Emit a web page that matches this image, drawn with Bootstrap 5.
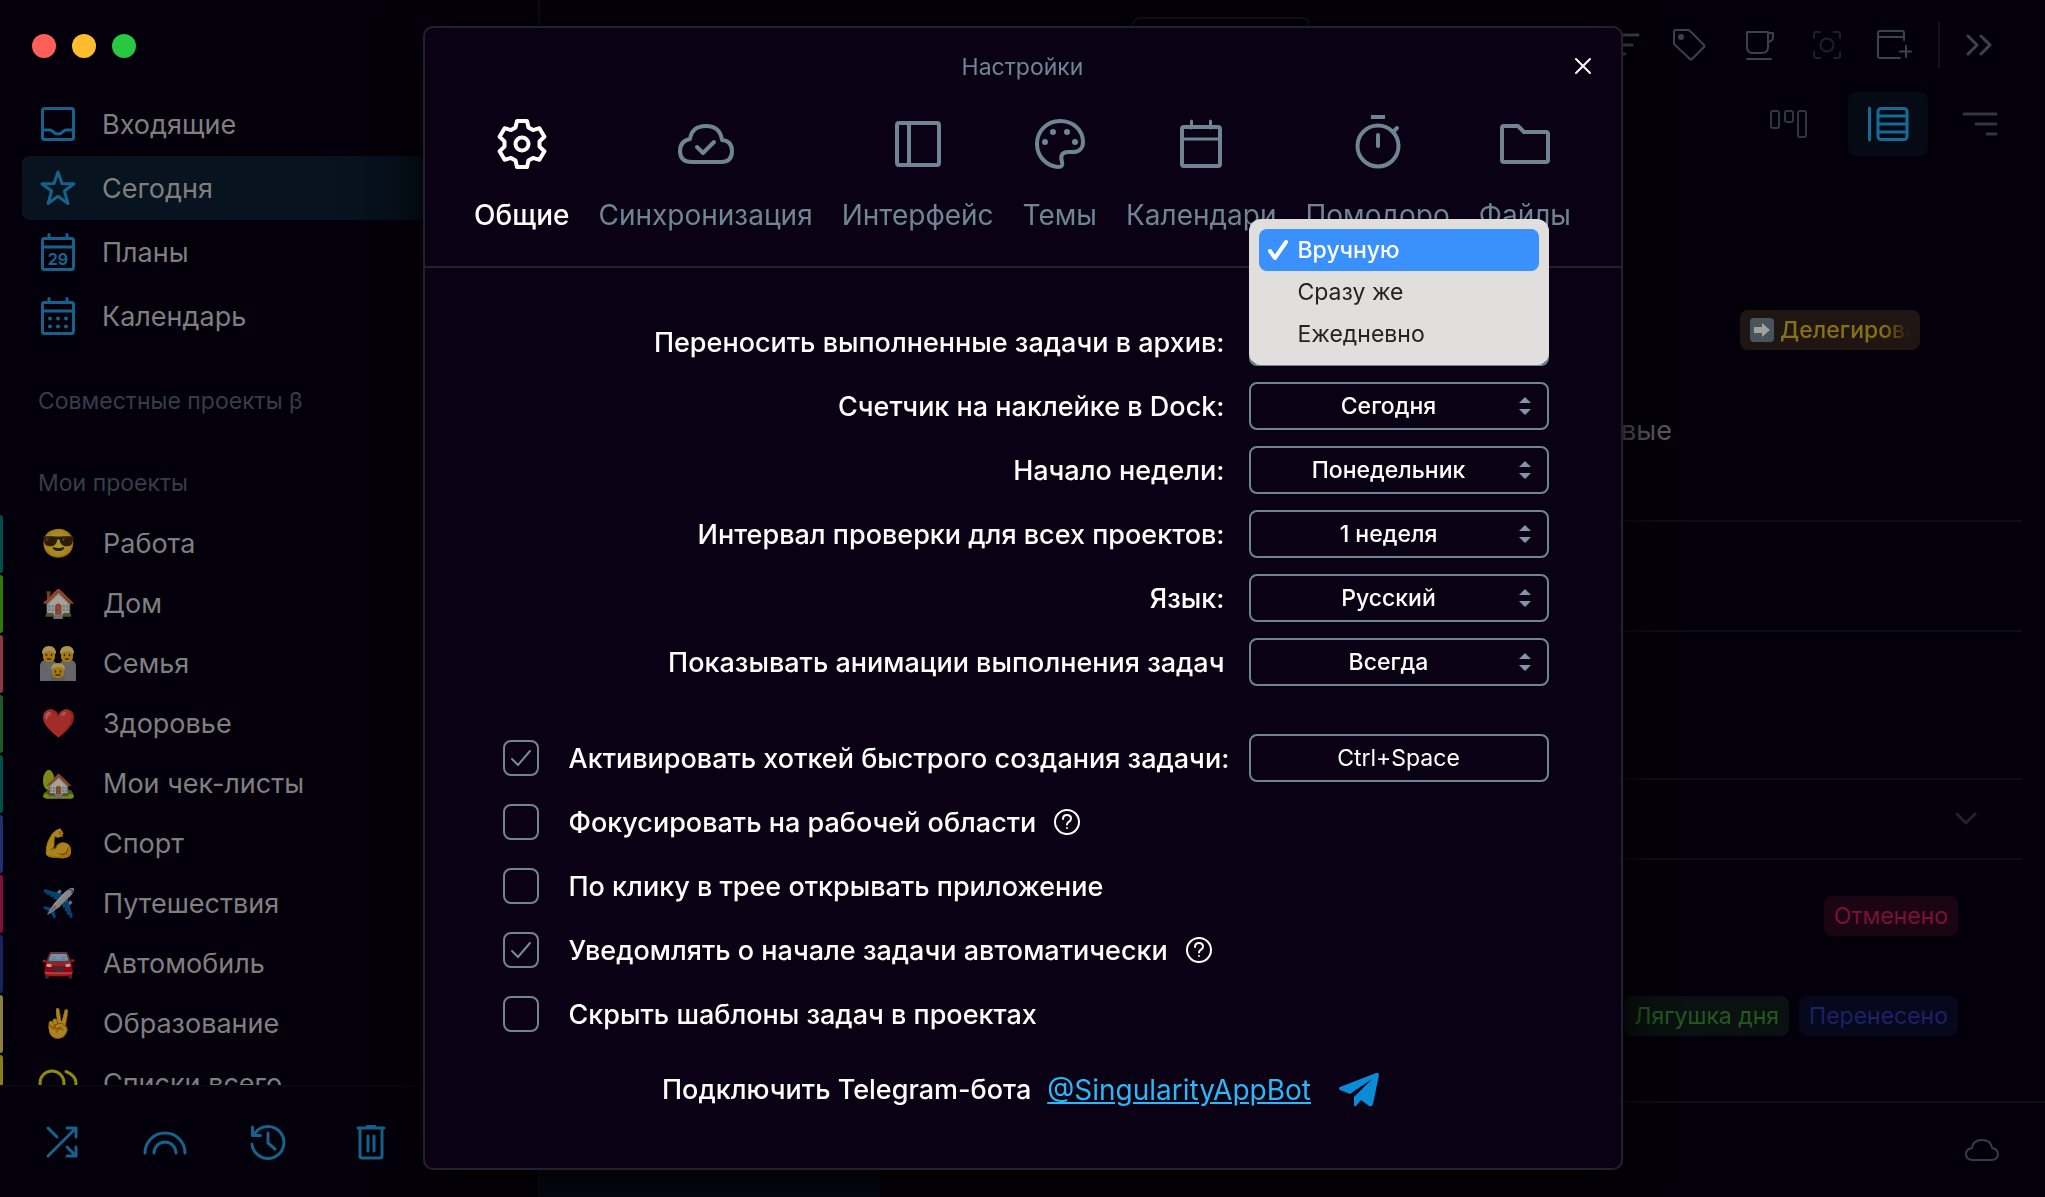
<!DOCTYPE html>
<html lang="ru">
<head>
<meta charset="utf-8">
<meta name="viewport" content="width=device-width, initial-scale=1">
<title>Настройки</title>
<link href="https://cdn.jsdelivr.net/npm/bootstrap@5.3.0/dist/css/bootstrap.min.css" rel="stylesheet">
<style>
:root{--page:#04000b;--dim:#7f7f80;--faint:#343e47;--blue:#17628a;--steel:#6f8594;--line:#0e0c15}
body{font-family:Inter,"Noto Sans",sans-serif;font-size:27px;line-height:40px;color:#fff;background-color:var(--page)}
svg{display:block;fill:none;stroke:currentColor;stroke-linecap:round;stroke-linejoin:round;flex:none}
svg.flat{stroke:none}
.app-shell{height:100vh;overflow:hidden}
.side-panel{width:540px;border-right:2px solid var(--line)}
.traffic{padding:34px 32px}
.traffic i{width:24px;height:24px;border-radius:50%}
.t-red{background:#ff5f57}.t-yellow{background:#febc2e}.t-green{background:#28c840}
.side-nav{margin-left:22px}
.side-nav .nav-link{height:64px;padding:0 18px;gap:26px;color:var(--dim);border-radius:8px;margin-right:22px}
.side-nav .nav-link.active{background:linear-gradient(90deg,#07131f 60%,#050d17);color:var(--dim)}
.side-nav svg{color:var(--blue)}
.side-nav .nav-link span,.project-list .cap{padding-top:2px}
.group-title{font-size:23px;line-height:36px;color:var(--faint);padding-left:38px}
.gap-first{margin-top:35px}.gap-second{margin-top:46px}
.project-list{margin-top:12px;min-height:0;flex:1 1 0}
.project-list a{height:60px;color:var(--dim);padding-left:36px;position:relative}
.project-list a::before{content:"";position:absolute;left:0;top:2px;bottom:0;width:3px;border-radius:0 3px 3px 0;background:var(--bar)}
.emo{width:44px;margin-right:23px;font-size:28px;opacity:.66;display:flex;justify-content:center}
.emo .rings{stroke:#d8d010}
.emo .lash{stroke:#5b3b10}
.b-teal{--bar:#00504b}.b-green{--bar:#2f7a08}.b-rose{--bar:#8a3a40}.b-leaf{--bar:#1d5a24}.b-indigo{--bar:#262e70}.b-pink{--bar:#800f3c}.b-navy{--bar:#1a2258}.b-sand{--bar:#8a8040}.b-lemon{--bar:#8a8010}
.side-foot{height:112px;border-top:2px solid #09070f;padding-left:40px;gap:59px;color:var(--blue)}
.bare{background:none;border:0;padding:0;color:inherit;width:44px;height:44px;display:flex;align-items:center;justify-content:center}
.tool-row{height:90px;padding-right:44px;gap:23px;color:#39434b}
.search-edge{width:178px;height:56px;border:2px solid #15131d;border-radius:8px;background:none;margin-right:auto;margin-left:592px}
.tool-sep{width:2px;height:46px;background:#14141e;margin:0 -6px 0 -1px}
.view-row{padding:2px 25px 0 0;gap:12px;color:#2f3840}
.view-btn{width:80px;height:64px;border-radius:8px}
.view-btn.active{background:#050a14;color:#156a97}
.task-area{padding-right:23px}
.task-block{border-bottom:2px solid var(--line)}
.block-a{padding:104px 0 58px}
.block-a .tag-line{height:140px;padding-right:102px}
.task-name{line-height:62px;color:#5a5a5d;padding-right:350px}
.block-b{height:110px}.block-c{height:148px}
.block-d{height:80px;padding-right:34px;color:#22212c}
.tag-line{padding-right:64px;gap:10px}
.row-one{height:112px}.row-two{height:88px}
.tag-chip{height:40px;padding:0 10px;border-radius:8px;font-size:23px;white-space:nowrap}
.c-gold{width:180px;background:#1f1512;color:#877213;gap:6px;overflow:hidden}
.c-gold b{font-weight:500;flex:1;min-width:0;overflow:hidden;-webkit-mask-image:linear-gradient(90deg,#000 80%,transparent);mask-image:linear-gradient(90deg,#000 80%,transparent)}
.c-red{background:#1b0512;color:#7b1236}
.c-green{background:#0a1110;color:#225a1e}
.c-blue{background:#07081b;color:#1c2168}
.main-foot{height:96px;border-top:2px solid var(--line);padding-right:41px;color:#353e46}
.foot-tab{width:340px;background:#040913}
.settings-win{max-width:1200px;margin:26px auto}
.settings-win .modal-content{background:#0b0114;border:2px solid #25202e;border-radius:10px;box-shadow:0 10px 50px #000;color:#fff}
.win-title{height:78px;font-size:23px;color:var(--steel)}
.win-close{position:absolute;right:16px;top:16px;color:#fff}
.tab-bar{gap:29px;padding:8px 20px 30px;border-bottom:2px solid #25202e}
.tab-bar .nav-link{padding:0;gap:20px;color:var(--steel);font-size:28px;line-height:42px}
.tab-bar .nav-link.active{color:#fff;font-weight:500}
.tab-bar .ico{height:60px}
.win-body{padding:50px 72px 58px 78px;font-weight:500}
.opt-row{min-height:48px}
.opt-row label{padding-top:2px}
.opt-stack{gap:16px}
.pick{width:300px}
.pick .form-select,.hotkey{width:300px;height:48px;border:2px solid var(--steel);border-radius:8px;background:transparent none;color:#fff;font-size:23px;font-weight:500;line-height:40px;padding:0 36px 0 16px;text-align:center;text-align-last:center}
.hotkey{padding:0 16px;font-weight:400}
.pick option{color:#222}
.pick>svg{position:absolute;right:17px;top:15px;color:#8296a5;pointer-events:none}
.pick-menu.dropdown-menu{top:-99px;left:0;width:300px;padding:10px;background:#e0dfde;border:0;border-radius:12px;z-index:20}
.pick-menu .dropdown-item{height:42px;padding:0 9px;border-radius:8px;font-size:23px;color:#232323;font-weight:400;gap:10px;display:flex;align-items:center}
.pick-menu .dropdown-item.active{background:#3a91fd;color:#fff;font-weight:500}
.pick-menu .slot{width:20px;flex:none}
.opt-checks{margin-top:48px}
.tick.form-check-input{width:36px;height:36px;margin:0 30px 0 0;border:2px solid var(--steel);border-radius:8px;background-color:transparent;flex:none}
.tick.form-check-input:checked{background-color:transparent;border-color:var(--steel);background-image:url("data:image/svg+xml,%3Csvg xmlns='http://www.w3.org/2000/svg' viewBox='0 0 32 32'%3E%3Cpath fill='none' stroke='%2377899a' stroke-width='2' stroke-linecap='round' stroke-linejoin='round' d='M7 17l6 6L25 9'/%3E%3C/svg%3E")}
.help{width:28px;height:28px;margin-left:17px;color:#fff}
.bot-row{margin-top:32px;margin-right:10px;gap:16px}
.bot-row a{color:#2bb8f8;font-size:28px;font-weight:400}
.bot-row svg{margin-left:12px}
</style>
<script src="https://cdn.jsdelivr.net/npm/bootstrap@5.3.0/dist/js/bootstrap.bundle.min.js"></script>
</head>
<body>
<div class="app-shell d-flex">
  <aside class="side-panel d-flex flex-column flex-shrink-0">
    <div class="traffic d-flex gap-3"><i class="t-red"></i><i class="t-yellow"></i><i class="t-green"></i></div>
    <nav class="side-nav nav flex-column flex-nowrap">
      <a class="nav-link d-flex align-items-center" href="#"><svg width="36" height="36" stroke-width="3"><rect x="2.500" y="2.500" width="31" height="31" rx="2"/><path d="M3 24h7c3 0 3 4 8 4s5-4 8-4h7"/></svg><span>Входящие</span></a>
      <a class="nav-link active d-flex align-items-center" href="#"><svg width="36" height="36" stroke-width="3"><path d="M18 2l4 11.500 12 .300-9.600 7.200 3.500 12.500L18 26.300 8.100 33.500l3.500-12.500L2 13.800l12-.300z"/></svg><span>Сегодня</span></a>
      <a class="nav-link d-flex align-items-center" href="#"><svg width="36" height="40" stroke-width="3"><rect x="2.500" y="6.500" width="31" height="31" rx="2"/><path d="M9 2.500v4M27 2.500v4M3 15h30"/><text x="18" y="33" text-anchor="middle" font-size="16" font-weight="700" fill="currentColor" stroke="none">29</text></svg><span>Планы</span></a>
      <a class="nav-link d-flex align-items-center" href="#"><svg width="36" height="40" stroke-width="3"><rect x="2.500" y="6.500" width="31" height="31" rx="2"/><path d="M9 2.500v4M27 2.500v4M3 15h30"/><path stroke-width="4" d="M10 22.500h0M18 22.500h0M26 22.500h0M10 30.500h0M18 30.500h0M26 30.500h0"/></svg><span>Календарь</span></a>
    </nav>
    <div class="group-title gap-first">Совместные проекты β</div>
    <div class="group-title gap-second">Мои проекты</div>
    <div class="project-list overflow-hidden">
      <a class="b-teal d-flex align-items-center text-decoration-none" href="#"><span class="emo">😎</span><span class="cap">Работа</span></a>
      <a class="b-green d-flex align-items-center text-decoration-none" href="#"><span class="emo">🏠</span><span class="cap">Дом</span></a>
      <a class="b-rose d-flex align-items-center text-decoration-none" href="#"><span class="emo"><svg class="flat" width="36" height="36"><path fill="#9a9a9c" d="M0 36V21q0-5 5-6h8l5 5 5-5h8q5 1 5 6v15z"/><path fill="#8a8a8c" d="M11 36v-3q1-3 7-3t7 3v3z"/><g fill="#f2b81c"><rect x="3" y="3" width="12" height="14" rx="5"/><rect x="21" y="3" width="12" height="14" rx="5"/><rect x="12" y="20" width="12" height="13" rx="5"/></g><path fill="#ffe27a" d="M2 9q0-8 7-8t7 8q-3-3-7-3t-7 3zM20 9q0-8 7-8t7 8q-3-3-7-3t-7 3zM11 25q0-7 7-7t7 7q-3-3-7-3t-7 3z"/><path class="lash" stroke-width="1.500" d="M6.500 9.500v1M11.500 9.500v1M24.500 9.500v1M29.500 9.500v1M15.500 26v1M20.500 26v1M7.500 14h3M25.500 14h3M16 30h4"/></svg></span><span class="cap">Семья</span></a>
      <a class="b-leaf d-flex align-items-center text-decoration-none" href="#"><span class="emo">❤️</span><span class="cap">Здоровье</span></a>
      <a class="b-teal d-flex align-items-center text-decoration-none" href="#"><span class="emo">🏡</span><span class="cap">Мои чек-листы</span></a>
      <a class="b-indigo d-flex align-items-center text-decoration-none" href="#"><span class="emo">💪</span><span class="cap">Спорт</span></a>
      <a class="b-pink d-flex align-items-center text-decoration-none" href="#"><span class="emo">✈️</span><span class="cap">Путешествия</span></a>
      <a class="b-navy d-flex align-items-center text-decoration-none" href="#"><span class="emo">🚘</span><span class="cap">Автомобиль</span></a>
      <a class="b-sand d-flex align-items-center text-decoration-none" href="#"><span class="emo">✌️</span><span class="cap">Образование</span></a>
      <a class="b-lemon d-flex align-items-center text-decoration-none" href="#"><span class="emo"><svg class="rings" width="40" height="28" stroke-width="3"><circle cx="14" cy="14" r="12"/><path d="M28 2.500q10 4 10 11.500t-10 11.500"/></svg></span><span class="cap">Списки всего</span></a>
    </div>
    <div class="side-foot d-flex align-items-center">
      <button class="bare" aria-label="Перемешать"><svg width="34" height="34" stroke-width="3"><path d="M3 31L31 3M22 3h9v9M3 3l9 9M22 22l9 9M31 22v9h-9"/></svg></button>
      <button class="bare" aria-label="Радуга"><svg width="44" height="26" stroke-width="3"><path d="M2 24a20 20 0 0 1 40 0M11 24a11 11 0 0 1 22 0"/></svg></button>
      <button class="bare" aria-label="История"><svg width="36" height="38" stroke-width="3"><path d="M2 21A16 16 0 1 0 5 10M2.500 4v8.500h8M18 10v10l7 6"/></svg></button>
      <button class="bare" aria-label="Корзина"><svg width="30" height="36" stroke-width="3"><path d="M2 4h26M11 2.500h8M4 4v28q0 2 2 2h18q2 0 2-2V4M12 12v15M18 12v15"/></svg></button>
    </div>
  </aside>

  <main class="d-flex flex-column flex-grow-1 overflow-hidden">
    <div class="tool-row d-flex align-items-center">
      <button class="search-edge" aria-label="Поиск"></button>
      <button class="bare" aria-label="Сортировка"><svg width="44" height="26" stroke-width="3"><path d="M4 3h34M10 13h22M17 22h8"/></svg></button>
      <button class="bare me-1" aria-label="Метки"><svg width="34" height="34" stroke-width="2"><path d="M2 4q0-2 2-2h12q1 0 2 1l14 14q1 1 0 2L20 31q-1 1-2 0L3 17q-1-1-1-2z"/><circle cx="9" cy="9" r="2" fill="currentColor"/></svg></button>
      <button class="bare" aria-label="Перерыв"><svg width="32" height="32" stroke-width="2"><path d="M3 3h21v15q0 6-6 6H9q-6 0-6-6zM24 4h5v4q0 4-5 5M3 30h24"/></svg></button>
      <button class="bare opacity-50" aria-label="Фокус"><svg width="32" height="32" stroke-width="2"><path d="M3 9V5q0-2 2-2h4M23 3h4q2 0 2 2v4M29 23v4q0 2-2 2h-4M9 29H5q-2 0-2-2v-4"/><circle cx="16" cy="16" r="6.500"/></svg></button>
      <button class="bare" aria-label="Новое окно"><svg width="38" height="32" stroke-width="2"><path d="M29 11V4q0-2-2-2H5Q3 2 3 4v23q0 2 2 2h20M3 8h26M31 17v11M25 22.500h11"/></svg></button>
      <span class="tool-sep"></span>
      <button class="bare" aria-label="Ещё"><svg width="28" height="22" stroke-width="3"><path d="M3 2l9 9-9 9M16 2l9 9-9 9"/></svg></button>
    </div>
    <div class="view-row d-flex justify-content-end">
      <button class="bare view-btn me-2" aria-label="Канбан"><svg width="38" height="30" stroke-width="2"><rect x="2" y="2" width="8" height="17" rx="2"/><rect x="16" y="2" width="8" height="11" rx="2"/><rect x="29" y="2" width="8" height="26" rx="2"/></svg></button>
      <button class="bare view-btn active" aria-label="Список"><svg width="42" height="36" stroke-width="3"><path d="M2.500 2v32M11 10h29M11 18h29M11 26h29"/><rect x="11" y="2.500" width="29" height="31" rx="3"/></svg></button>
      <button class="bare view-btn" aria-label="Порядок"><svg width="36" height="24" stroke-width="3"><path d="M2 2h32M14 12h20M25 22h9"/></svg></button>
    </div>
    <div class="task-area">
      <div class="task-block block-a">
        <div class="tag-line d-flex align-items-center justify-content-end"><span class="tag-chip c-gold d-flex align-items-center"><svg class="flat" width="24" height="24"><rect width="24" height="24" rx="4" fill="#46545b"/><path fill="#a3a19c" d="M4 9h8V5l8 7-8 7v-4H4z"/></svg><b>Делегировано</b></span></div>
        <div class="task-name text-end">вые</div>
      </div>
      <div class="task-block block-b"></div>
      <div class="task-block block-c"></div>
      <div class="task-block block-d d-flex align-items-center justify-content-end"><button class="bare" aria-label="Развернуть"><svg width="22" height="14" stroke-width="3"><path d="M2 2l9 9 9-9"/></svg></button></div>
      <div class="tag-line row-one d-flex align-items-center justify-content-end"><span class="tag-chip c-red">Отменено</span></div>
      <div class="tag-line row-two d-flex align-items-center justify-content-end"><span class="tag-chip c-green">Лягушка дня</span><span class="tag-chip c-blue">Перенесено</span></div>
    </div>
    <div class="main-foot mt-auto d-flex justify-content-between align-items-center">
      <div class="foot-tab h-100"></div>
      <button class="bare" aria-label="Облако"><svg width="36" height="24" stroke-width="2"><path d="M9 22q-7 0-7-6 0-5 6-6 1-8 10-8t10 8q6 1 6 6 0 6-7 6z"/></svg></button>
    </div>
  </main>
</div>

<div class="modal d-block" role="dialog" aria-modal="true" aria-labelledby="winTitle">
  <div class="modal-dialog settings-win">
    <div class="modal-content">
      <div class="win-title d-flex align-items-center justify-content-center" id="winTitle">Настройки</div>
      <button class="bare win-close" aria-label="Закрыть"><svg width="18" height="18" stroke-width="2"><path d="M2 2l14 14M16 2L2 16"/></svg></button>
      <nav class="tab-bar nav flex-nowrap justify-content-center">
        <a class="nav-link active d-flex flex-column align-items-center" href="#"><span class="ico d-flex align-items-center"><svg width="52" height="52" viewBox="-26 -26 52 52" stroke-width="4"><path d="M-6.500-16.500L-5-23H5L6.500-16.500 11-13.900 17.400-15.800 22.400-7.200 17.500-2.600V2.600L22.400 7.200 17.400 15.800 11 13.900 6.500 16.500 5 23H-5L-6.500 16.500-11 13.900-17.400 15.800-22.400 7.200-17.500 2.600V-2.600L-22.400-7.200-17.400-15.800-11-13.900z"/><circle r="6.500"/></svg></span>Общие</a>
        <a class="nav-link d-flex flex-column align-items-center" href="#"><span class="ico d-flex align-items-center"><svg width="58" height="44" stroke-width="4"><path d="M15 40Q3 40 3 29q0-10 10-12Q15 4 29 4t16 14q10 1 10 11 0 11-11 11zM20 25l6 6 11-11"/></svg></span>Синхронизация</a>
        <a class="nav-link d-flex flex-column align-items-center" href="#"><span class="ico d-flex align-items-center"><svg width="46" height="48" stroke-width="4"><rect x="2" y="3" width="42" height="42" rx="2"/><path d="M14 3v42"/></svg></span>Интерфейс</a>
        <a class="nav-link d-flex flex-column align-items-center" href="#"><span class="ico d-flex align-items-center"><svg width="52" height="52" stroke-width="4"><path d="M26 3C13 3 3 13 3 26s10 22 21 23c4 0 5-2 4-5-2-6 0-10 6-10h5c6 0 10-4 10-10C49 12 39 3 26 3z"/><path stroke-width="6" d="M11 24h0M19 14h0M33 14h0M41 24h0"/></svg></span>Темы</a>
        <a class="nav-link d-flex flex-column align-items-center" href="#"><span class="ico d-flex align-items-center"><svg width="44" height="50" stroke-width="4"><rect x="3" y="8" width="38" height="39" rx="2"/><path stroke-width="3" d="M12.500 2v7M31.500 2v7M3 20h38"/></svg></span>Календари</a>
        <a class="nav-link d-flex flex-column align-items-center" href="#"><span class="ico d-flex align-items-center"><svg width="48" height="60" stroke-width="4"><circle cx="24" cy="32" r="20.500"/><path stroke-linecap="butt" d="M17 3h14"/><path d="M24 21v11M40 17l3-3"/></svg></span>Помодоро</a>
        <a class="nav-link d-flex flex-column align-items-center" href="#"><span class="ico d-flex align-items-center"><svg width="52" height="42" stroke-width="4"><path d="M3 5q0-2 2-2h14l6 6h22q2 0 2 2v26q0 2-2 2H5q-2 0-2-2z"/></svg></span>Файлы</a>
      </nav>
      <div class="win-body">
        <div class="opt-stack d-flex flex-column">
          <div class="opt-row d-flex justify-content-end align-items-center">
            <label class="me-4" for="s1">Переносить выполненные задачи в архив:</label>
            <div class="pick position-relative"><select class="form-select" id="s1"><option>Вручную</option><option>Сразу же</option><option>Ежедневно</option></select>
              <div class="pick-menu dropdown-menu show">
                <button class="dropdown-item active"><span class="slot"><svg width="20" height="22" stroke-width="4"><path d="M2 12l5 7L18 3"/></svg></span>Вручную</button>
                <button class="dropdown-item"><span class="slot"></span>Сразу же</button>
                <button class="dropdown-item"><span class="slot"></span>Ежедневно</button>
              </div></div>
          </div>
          <div class="opt-row d-flex justify-content-end align-items-center"><label class="me-4" for="s2">Счетчик на наклейке в Dock:</label>
            <div class="pick position-relative"><select class="form-select" id="s2"><option>Сегодня</option></select><svg class="flat" width="14" height="18"><path fill="currentColor" d="M1 6l6-6 6 6zM1 12h12l-6 6z"/></svg></div></div>
          <div class="opt-row d-flex justify-content-end align-items-center"><label class="me-4" for="s3">Начало недели:</label>
            <div class="pick position-relative"><select class="form-select" id="s3"><option>Понедельник</option></select><svg class="flat" width="14" height="18"><path fill="currentColor" d="M1 6l6-6 6 6zM1 12h12l-6 6z"/></svg></div></div>
          <div class="opt-row d-flex justify-content-end align-items-center"><label class="me-4" for="s4">Интервал проверки для всех проектов:</label>
            <div class="pick position-relative"><select class="form-select" id="s4"><option>1 неделя</option></select><svg class="flat" width="14" height="18"><path fill="currentColor" d="M1 6l6-6 6 6zM1 12h12l-6 6z"/></svg></div></div>
          <div class="opt-row d-flex justify-content-end align-items-center"><label class="me-4" for="s5">Язык:</label>
            <div class="pick position-relative"><select class="form-select" id="s5"><option>Русский</option></select><svg class="flat" width="14" height="18"><path fill="currentColor" d="M1 6l6-6 6 6zM1 12h12l-6 6z"/></svg></div></div>
          <div class="opt-row d-flex justify-content-end align-items-center"><label class="me-4" for="s6">Показывать анимации выполнения задач</label>
            <div class="pick position-relative"><select class="form-select" id="s6"><option>Всегда</option></select><svg class="flat" width="14" height="18"><path fill="currentColor" d="M1 6l6-6 6 6zM1 12h12l-6 6z"/></svg></div></div>
        </div>
        <div class="opt-checks opt-stack d-flex flex-column">
          <div class="opt-row d-flex align-items-center"><input class="form-check-input tick" type="checkbox" id="c1" checked><label for="c1">Активировать хоткей быстрого создания задачи:</label><input class="hotkey ms-auto" type="text" value="Ctrl+Space" aria-label="Хоткей"></div>
          <div class="opt-row d-flex align-items-center"><input class="form-check-input tick" type="checkbox" id="c2"><label for="c2">Фокусировать на рабочей области</label><button class="bare help" aria-label="Справка"><svg width="28" height="28" stroke-width="2"><circle cx="14" cy="14" r="12"/><path d="M10 11q0-4 4-4t4 3.500q0 2-2 3.200t-2 2.800M14 20h0"/></svg></button></div>
          <div class="opt-row d-flex align-items-center"><input class="form-check-input tick" type="checkbox" id="c3"><label for="c3">По клику в трее открывать приложение</label></div>
          <div class="opt-row d-flex align-items-center"><input class="form-check-input tick" type="checkbox" id="c4" checked><label for="c4">Уведомлять о начале задачи автоматически</label><button class="bare help" aria-label="Справка"><svg width="28" height="28" stroke-width="2"><circle cx="14" cy="14" r="12"/><path d="M10 11q0-4 4-4t4 3.500q0 2-2 3.200t-2 2.800M14 20h0"/></svg></button></div>
          <div class="opt-row d-flex align-items-center"><input class="form-check-input tick" type="checkbox" id="c5"><label for="c5">Скрыть шаблоны задач в проектах</label></div>
        </div>
        <div class="bot-row d-flex justify-content-center align-items-center"><span>Подключить Telegram-бота</span><a href="#">@SingularityAppBot</a><svg class="flat" width="40" height="34"><path fill="#0a8bd8" d="M1 14L37 0q3-1 3 2L34 31q-1 3-4 2l-8-6-5 6q-2 1-2-1v-8L33 6 11 21 1 17q-2-2 0-3z"/></svg></div>
      </div>
    </div>
  </div>
</div>
</body>
</html>
